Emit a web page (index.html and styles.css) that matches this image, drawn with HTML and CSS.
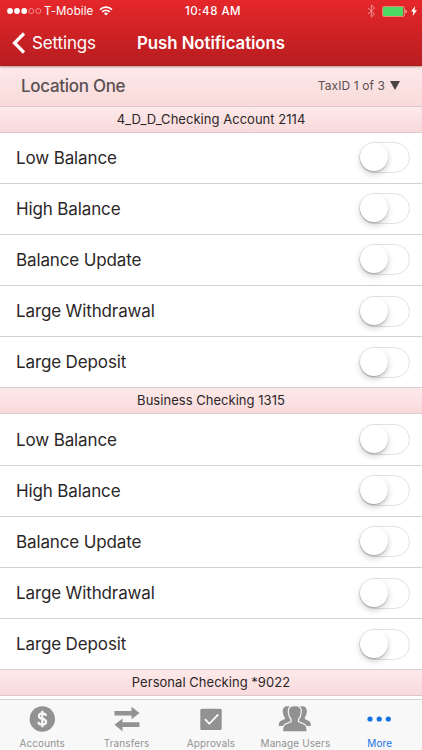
FILE: index.html
```html
<!DOCTYPE html>
<html lang="en">
<head>
<meta charset="utf-8">
<title>Push Notifications</title>
<link rel="stylesheet" href="styles.css">
</head>
<body>
<div class="app">
  <header class="top">
    <div class="status">
      <div class="carrier">
        <svg class="signal" width="36" height="8" viewBox="0 0 36 8"><g fill="#fff"><circle cx="3" cy="4" r="2.9"/><circle cx="10" cy="4" r="2.9"/><circle cx="17.2" cy="4" r="2.9"/></g><g fill="none" stroke="#f4a3a3" stroke-width=".8"><circle cx="24.2" cy="4" r="2.5"/><circle cx="31.3" cy="4" r="2.5"/></g></svg>
        <span class="carrier-name">T-Mobile</span>
        <svg class="wifi" width="14" height="10" viewBox="0 0 14 10" fill="none" stroke="#fff" stroke-width="1.6"><path d="M1 3.6a8.6 8.6 0 0 1 12 0M3.2 5.9a5.5 5.5 0 0 1 7.6 0"/><path d="M7 9.6 4.9 7.5a3.1 3.1 0 0 1 4.2 0z" fill="#fff" stroke="none"/></svg>
      </div>
      <span class="clock">10:48 AM</span>
      <div class="power">
        <svg width="9" height="14" viewBox="0 0 9 14" fill="none" stroke="#f09090" stroke-width="1"><path d="M1 4l6.5 6L4.3 13V1l3.2 3L1 10"/></svg>
        <svg class="battery" width="25" height="11" viewBox="0 0 25 11"><rect x=".5" y=".5" width="22" height="10" rx="1.5" fill="none" stroke="#ed8078"/><rect x="1" y="1" width="20.2" height="9" rx="1" fill="#4cd964"/><path d="M23.5 3.7q1.4.4 1.4 1.8t-1.4 1.8z" fill="#fbb"/></svg>
        <svg class="bolt" width="6" height="10" viewBox="0 0 6 10"><path d="M4.2 0 0 5.5h2.4L1.6 10 6 4.2H3.5z" fill="#fff"/></svg>
      </div>
    </div>
    <nav class="nav">
      <div class="back"><svg width="14" height="22" viewBox="0 0 14 22" fill="none" stroke="#fff" stroke-width="3.2"><path d="M12 1.5 2.5 11 12 20.5"/></svg><span class="back-label">Settings</span></div>
      <h1 class="title">Push Notifications</h1>
    </nav>
  </header>
  <main class="content">
    <div class="location"><span class="place">Location One</span><span class="tax">TaxID 1 of 3 <svg width="10" height="9" viewBox="0 0 10 9"><path d="M0 0h10L5 9z" fill="#4c4444"/></svg></span></div>
    <section>
      <h2 class="account">4_D_D_Checking Account 2114</h2>
      <div class="row"><span>Low Balance</span><i class="switch"></i></div>
      <div class="row"><span>High Balance</span><i class="switch"></i></div>
      <div class="row"><span>Balance Update</span><i class="switch"></i></div>
      <div class="row"><span>Large Withdrawal</span><i class="switch"></i></div>
      <div class="row"><span>Large Deposit</span><i class="switch"></i></div>
    </section>
    <section>
      <h2 class="account">Business Checking 1315</h2>
      <div class="row"><span>Low Balance</span><i class="switch"></i></div>
      <div class="row"><span>High Balance</span><i class="switch"></i></div>
      <div class="row"><span>Balance Update</span><i class="switch"></i></div>
      <div class="row"><span>Large Withdrawal</span><i class="switch"></i></div>
      <div class="row"><span>Large Deposit</span><i class="switch"></i></div>
    </section>
    <section>
      <h2 class="account">Personal Checking *9022</h2>
    </section>
  </main>
  <footer class="tabs">
    <div class="tab"><svg width="34" height="30" viewBox="0 0 34 30"><circle cx="17.3" cy="15" r="12.7" fill="#929292"/><path d="M21 11.9q-.4-2.5-3.7-2.5-3.4 0-3.4 2.6 0 2.2 3.4 2.9 3.8.7 3.8 3.1 0 2.7-3.8 2.7-3.5 0-4-2.7M17.3 6.8v16.5" fill="none" stroke="#f8f8f8" stroke-width="2.2"/></svg><span>Accounts</span></div>
    <div class="tab"><svg width="34" height="30" viewBox="0 0 34 30" fill="#929292"><path d="M4.5 7h17V2.8L29.5 9l-8 6.2v-3.7h-17zM29.5 18.3h-17v-3.8l-8 6.3 8 6.4V23h17z"/></svg><span>Transfers</span></div>
    <div class="tab"><svg width="34" height="30" viewBox="0 0 34 30"><rect x="6.3" y="4.8" width="21.4" height="21.2" rx="1.5" fill="#929292"/><path d="m11 15.2 4.3 4.6 9-9.4" fill="none" stroke="#fff" stroke-width="1.8"/></svg><span>Approvals</span></div>
    <div class="tab"><svg width="34" height="30" viewBox="0 0 34 30" fill="#929292">
      <path d="M9.8 2.3c3.4 0 5.2 1.8 5 5.2-.1 2.6-.8 4.6-2 5.8v2l3.7 1.7V22H.8c0-3.3.5-4.5 2.3-5.3l3.7-1.7v-1.7c-1.2-1.2-1.8-3-2-5.8-.2-3.4 1.6-5.2 5-5.2z"/>
      <path d="M23.8 2.3c3.4 0 5.2 1.8 5 5.2-.2 2.8-.8 4.6-2 5.8V15l3.7 1.7c1.8.8 2.3 2 2.3 5.3H17v-5l3.8-1.7v-2c-1.2-1.2-1.9-3.2-2-5.8-.2-3.4 1.6-5.2 5-5.2z"/>
      <path d="M16.8 1.6c4.6 0 7 2.2 6.5 6.6-.3 3.2-1.2 5.5-2.8 7v2.4l6 2.7c1.8.9 2.6 2.8 2.6 7.6H4.5c0-4.8.8-6.7 2.6-7.6l6-2.7v-2.4c-1.6-1.5-2.5-3.8-2.8-7-.5-4.4 1.9-6.6 6.5-6.6z" stroke="#f8f8f8" stroke-width="1.2"/>
    </svg><span>Manage Users</span></div>
    <div class="tab active"><svg width="34" height="30" viewBox="0 0 34 30" fill="#1472e8"><circle cx="7" cy="15" r="2.6"/><circle cx="16.2" cy="15" r="2.6"/><circle cx="25.3" cy="15" r="2.6"/></svg><span>More</span></div>
  </footer>
</div>
</body>
</html>
```

FILE: styles.css
```css
* { box-sizing: border-box; }
body { margin: 0; font-family: Inter, "Liberation Sans", sans-serif; color: #2b2728; background: #fff; }
svg { display: block; }
.app { width: 422px; height: 750px; display: flex; flex-direction: column; overflow: hidden; }
.top { height: 66px; flex: none; color: #fff; background: linear-gradient(#e5272b, #b81d20); border-bottom: 1px solid #a91a1d; box-shadow: 0 1px 2px #8c555599; z-index: 1; }
.status { display: grid; grid-template-columns: 1fr auto 1fr; align-items: center; height: 22px; padding: 0 5px 0 7px; font-size: 11px; line-height: 22px; }
.carrier, .power { display: flex; align-items: center; }
.carrier-name { margin-left: 1px; font-size: 11.5px; letter-spacing: .12px; }
.wifi { margin-left: 6px; }
.clock { padding-left: 2px; font-size: 11.5px; font-weight: 500; letter-spacing: .5px; }
.power { justify-content: flex-end; }
.battery { margin-left: 6px; }
.bolt { margin-left: 4px; }
.nav { display: grid; grid-template-columns: 1fr auto 1fr; height: 42px; align-items: center; padding-left: 12px; padding-right: 12px; }
.back { display: flex; align-items: center; gap: 6px; font-size: 17px; }
.back-label { letter-spacing: -.15px; }
.title { margin: 0; font-size: 16.8px; font-weight: 600; line-height: 22px; letter-spacing: -.05px; }
.content { flex: 1; min-height: 0; overflow: hidden; }
.location { height: 40.5px; display: flex; align-items: center; justify-content: space-between; padding: 0 22px 0 21px; background: linear-gradient(#fde9e9, #f9dada); border-bottom: 1px solid #dccaca; color: #595052; }
.place { font-size: 17px; font-weight: 500; letter-spacing: -.3px; }
.tax { display: flex; align-items: center; gap: 5px; font-size: 12px; letter-spacing: .1px; }
.account { height: 26px; margin: 0; border-bottom: 1px solid #dcc9cb; background: linear-gradient(#fde9e9, #f9dadc); font-size: 13px; font-weight: 400; line-height: 25px; text-align: center; letter-spacing: .03px; }
.row { height: 51.2px; display: flex; align-items: center; justify-content: space-between; padding: 0 12px 0 16px; border-bottom: 1px solid #d2d0d2; font-size: 17px; letter-spacing: -.13px; }
.switch { display: block; width: 51px; height: 31px; border: 1.5px solid #e2e2e2; border-radius: 16px; background: #fff; }
.switch::before { content: ""; display: block; width: 28px; height: 28px; border-radius: 50%; background: #fff; box-shadow: 0 3px 6px #0003, 0 1px 1px #0003; }
.tabs { height: 51px; flex: none; display: grid; grid-template-columns: repeat(5, 1fr); border-top: 1px solid #d5d5d5; background: #f8f8f8; color: #929292; font-size: 10px; line-height: 12px; }
.tab { display: flex; flex-direction: column; align-items: center; padding-top: 4px; gap: 3px; white-space: nowrap; letter-spacing: .1px; }
.active { color: #1472e8; }
```
